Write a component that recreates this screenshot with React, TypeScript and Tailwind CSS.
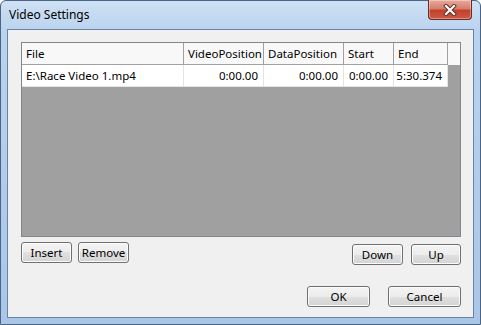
const columns = [
  { title: "File", width: "w-[162px]" },
  { title: "VideoPosition", width: "w-[80px]" },
  { title: "DataPosition", width: "w-[80px]" },
  { title: "Start", width: "w-[50px]" },
  { title: "End", width: "w-[54px]" },
];

const row = ["E:\\Race Video 1.mp4", "0:00.00", "0:00.00", "0:00.00", "5:30.374"];

function WinButton({ label, className = "" }: { label: string; className?: string }) {
  return (
    <button
      className={
        "h-[21px] rounded-[3px] border border-[#707070] bg-[linear-gradient(to_bottom,#f4f4f4_0%,#ececec_50%,#e0e0e0_50%,#d4d4d4_100%)] shadow-[inset_0_0_0_1px_#fcfcfc] text-[11.5px] leading-none text-black " +
        className
      }
    >
      {label}
    </button>
  );
}

function CloseButton() {
  return (
    <div className="ml-auto mr-[8px] -mt-px h-[20px] w-[44px] self-start rounded-b-[4px] border border-t-0 border-[#6b2b25] bg-[linear-gradient(to_bottom,#e9a99b_0%,#d47f6e_45%,#c4402b_55%,#c95a45_100%)] shadow-[inset_0_0_0_1px_rgba(255,255,255,0.35)] flex items-center justify-center">
      <svg width="14" height="12" viewBox="0 0 14 12">
        <path d="M3 2 L11 10 M11 2 L3 10" stroke="#5a2a24" strokeWidth="4" strokeLinecap="square" />
        <path d="M3 2 L11 10 M11 2 L3 10" stroke="#ffffff" strokeWidth="2.2" strokeLinecap="square" />
      </svg>
    </div>
  );
}

export default function App() {
  return (
    <div
      className="w-[481px] h-[325px] flex flex-col rounded-t-[6px] border border-[#4a6485] bg-[linear-gradient(to_bottom,#cfe1f4_0px,#bad3ee_30px,#a9c6e8_100%)] text-black"
      style={{ fontFamily: '"Segoe UI", "Noto Sans", "Open Sans", sans-serif' }}
    >
      <div className="h-[28px] flex items-center pl-[8px]">
        <span className="text-[12px] text-black">Video Settings</span>
        <CloseButton />
      </div>

      <div className="flex-1 mx-[6px] mb-[6px] border border-[#6a84a6] bg-[#f0f0f0] flex flex-col pt-[12px] pl-[13px] pr-[12px]">
        <div className="h-[195px] border border-[#828790] bg-[#a0a0a0] flex flex-col">
          <div className="flex h-[22px] bg-[#f8f8f8]">
            {columns.map((c) => (
              <div
                key={c.title}
                className={`${c.width} shrink-0 border-r border-b border-[#a0a0a0] pl-[4px] pt-[1px] flex items-center text-[11.5px]`}
              >
                {c.title}
              </div>
            ))}
          </div>
          <div className="flex h-[22px]">
            {row.map((v, i) => (
              <div
                key={i}
                className={`${columns[i].width} shrink-0 bg-white border-r border-b border-[#e3e3e3] flex items-center text-[11.5px] ${
                  i === 0 ? "pl-[4px]" : "justify-end pr-[5px]"
                }`}
              >
                {v}
              </div>
            ))}
          </div>
        </div>

        <div className="mt-[5px] flex items-start">
          <WinButton label="Insert" className="w-[51px]" />
          <WinButton label="Remove" className="w-[51px] ml-[6px]" />
          <WinButton label="Down" className="w-[51px] ml-auto mt-[2px]" />
          <WinButton label="Up" className="w-[50px] ml-[8px] mt-[2px]" />
        </div>

        <div className="mt-auto mb-[10px] flex justify-end">
          <WinButton label="OK" className="w-[63px]" />
          <WinButton label="Cancel" className="w-[73px] ml-[18px]" />
        </div>
      </div>
    </div>
  );
}
